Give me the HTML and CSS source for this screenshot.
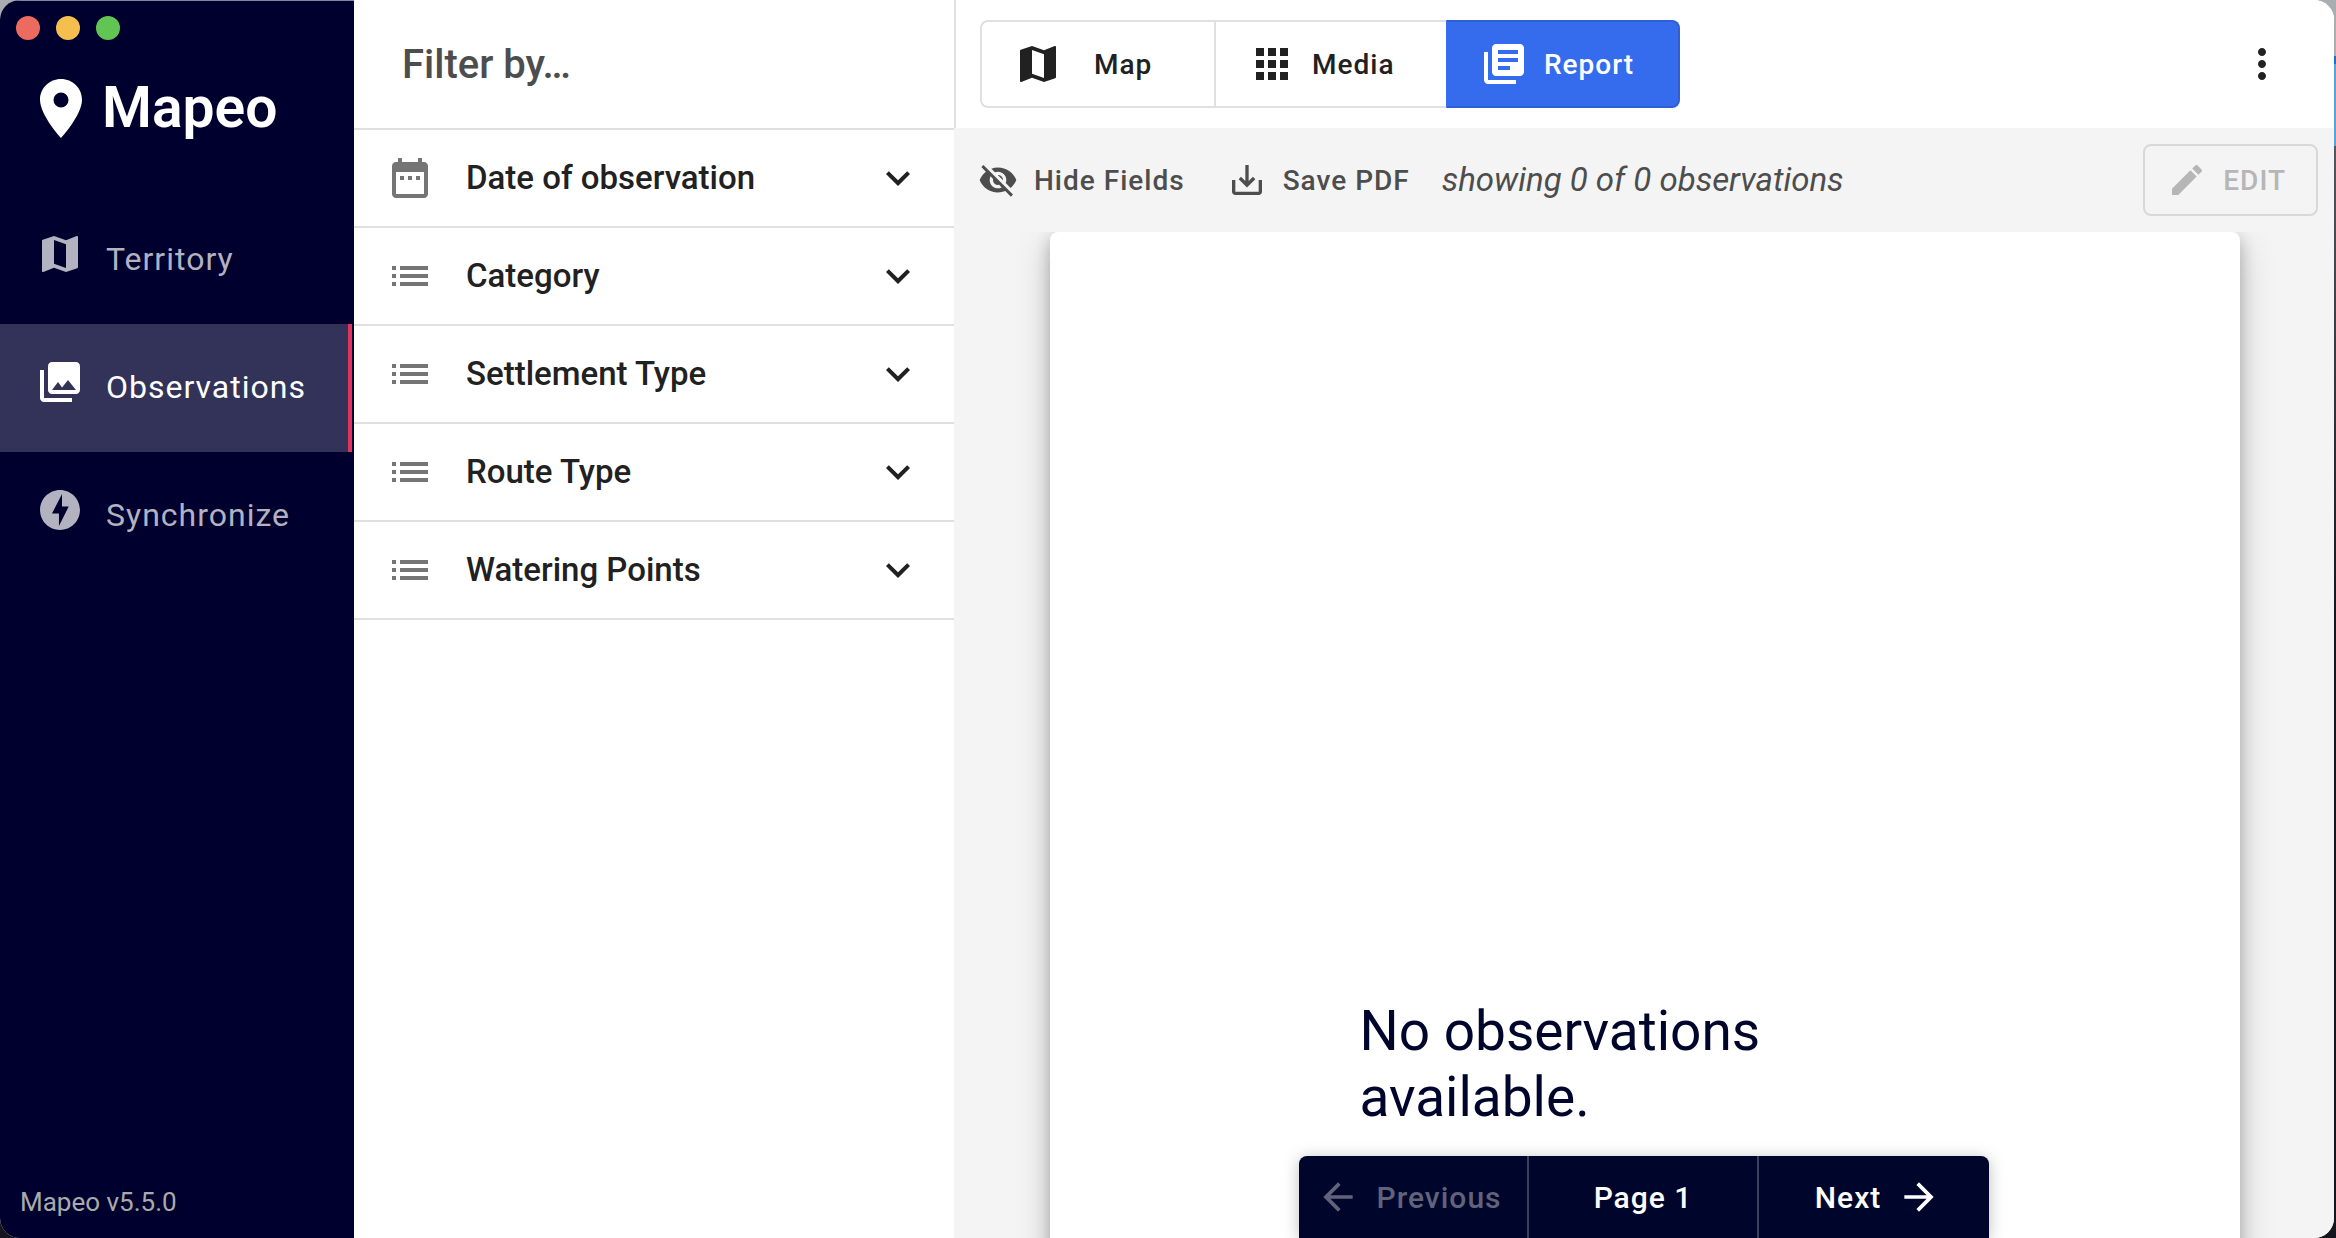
FILE: index.html
```html
<!DOCTYPE html>
<html lang="en">
<head>
<meta charset="utf-8">
<title>Mapeo</title>
<link rel="stylesheet" href="styles.css">
</head>
<body>
<svg class="defs" aria-hidden="true">
  <symbol id="map" viewBox="0 0 24 24"><path d="M20.5 3l-.16.03L15 5.1 9 3 3.36 4.900c-.21.07-.36.25-.36.48V20.500c0 .28.22.5.5.5l.16-.03L9 18.900l6 2.100 5.640-1.900c.21-.07.36-.25.36-.48V3.500c0-.28-.22-.5-.5-.5zM15 19l-6-2.110V5l6 2.110V19z"/></symbol>
  <symbol id="list" viewBox="0 0 24 24"><path d="M3 13h2v-2H3v2zm0 4h2v-2H3v2zm0-8h2V7H3v2zm4 4h14v-2H7v2zm0 4h14v-2H7v2zM7 7v2h14V7H7z"/></symbol>
  <symbol id="more" viewBox="0 0 24 24"><path d="M16.590 8.590L12 13.170 7.410 8.590 6 10l6 6 6-6z"/></symbol>
</svg>
<div class="window">
  <aside class="sidebar">
    <div class="lights"><span class="light close"></span><span class="light minimize"></span><span class="light expand"></span></div>
    <div class="brand">
      <svg class="pin" viewBox="0 0 42 59"><path fill-rule="evenodd" d="M21 0C9.400 0 0 9.200 0 20.700 0 36 21 59 21 59s21-23 21-38.300C42 9.200 32.600 0 21 0zm0 28.500a7.500 7.500 0 1 1 0-15 7.500 7.500 0 0 1 0 15z"/></svg>
      <span>Mapeo</span>
    </div>
    <nav class="nav">
      <a class="nav-item" href="#territory"><svg class="icon"><use href="#map"/></svg><span>Territory</span></a>
      <a class="nav-item selected" href="#observations" aria-current="page"><svg class="icon" viewBox="0 0 24 24"><path d="M22 16V4c0-1.100-.9-2-2-2H8c-1.100 0-2 .9-2 2v12c0 1.100.9 2 2 2h12c1.100 0 2-.9 2-2zm-11-4l2.030 2.710L16 11l4 5H8l3-4zM2 6v14c0 1.100.9 2 2 2h14v-2H4V6H2z"/></svg><span>Observations</span></a>
      <a class="nav-item" href="#synchronize"><svg class="icon" viewBox="0 0 24 24"><path d="M12 2.020c-5.510 0-9.980 4.470-9.980 9.980s4.470 9.980 9.980 9.980 9.980-4.470 9.980-9.980S17.510 2.020 12 2.020zM11.480 20v-6.260H8L13 4v6.260h3.350L11.480 20z"/></svg><span>Synchronize</span></a>
    </nav>
    <div class="version">Mapeo v5.5.0</div>
  </aside>

  <section class="filters">
    <h2 class="filters-title">Filter by…</h2>
    <button class="filter" type="button"><svg class="icon" viewBox="0 0 24 24"><path d="M19 4h-1V2h-2v2H8V2H6v2H5c-1.110 0-2 .9-2 2v14c0 1.100.89 2 2 2h14c1.100 0 2-.9 2-2V6c0-1.100-.9-2-2-2zm0 16H5V9h14v11zM7 11h2v2H7zM11 11h2v2h-2zM15 11h2v2h-2z"/></svg><span>Date of observation</span><svg class="icon chevron"><use href="#more"/></svg></button>
    <button class="filter" type="button"><svg class="icon"><use href="#list"/></svg><span>Category</span><svg class="icon chevron"><use href="#more"/></svg></button>
    <button class="filter" type="button"><svg class="icon"><use href="#list"/></svg><span>Settlement Type</span><svg class="icon chevron"><use href="#more"/></svg></button>
    <button class="filter" type="button"><svg class="icon"><use href="#list"/></svg><span>Route Type</span><svg class="icon chevron"><use href="#more"/></svg></button>
    <button class="filter" type="button"><svg class="icon"><use href="#list"/></svg><span>Watering Points</span><svg class="icon chevron"><use href="#more"/></svg></button>
  </section>

  <main class="main">
    <header class="topbar">
      <div class="views">
        <button class="view view-map" type="button"><svg class="icon"><use href="#map"/></svg><span>Map</span></button>
        <button class="view" type="button"><svg class="icon" viewBox="0 0 24 24"><path d="M4 8h4V4H4v4zm6 12h4v-4h-4v4zm-6 0h4v-4H4v4zm0-6h4v-4H4v4zm6 0h4v-4h-4v4zm6-10v4h4V4h-4zm-6 4h4V4h-4v4zm6 6h4v-4h-4v4zm0 6h4v-4h-4v4z"/></svg><span>Media</span></button>
        <button class="view active" type="button" aria-pressed="true"><svg class="icon" viewBox="0 0 24 24"><path d="M4 6H2v14c0 1.100.9 2 2 2h14v-2H4V6zm16-4H8c-1.100 0-2 .9-2 2v12c0 1.100.9 2 2 2h12c1.100 0 2-.9 2-2V4c0-1.100-.9-2-2-2zm-1 9H9V9h10v2zm-4 4H9v-2h6v2zm4-8H9V5h10v2z"/></svg><span>Report</span></button>
      </div>
      <button class="menu" type="button" aria-label="More options"><svg class="icon" viewBox="0 0 24 24"><path d="M12 8c1.100 0 2-.9 2-2s-.9-2-2-2-2 .9-2 2 .9 2 2 2zm0 2c-1.100 0-2 .9-2 2s.9 2 2 2 2-.9 2-2-.9-2-2-2zm0 6c-1.100 0-2 .9-2 2s.9 2 2 2 2-.9 2-2-.9-2-2-2z"/></svg></button>
    </header>
    <div class="toolbar">
      <button class="tool" type="button"><svg class="icon small" viewBox="0 0 24 24"><path d="M12 7c2.760 0 5 2.240 5 5 0 .65-.13 1.260-.36 1.830l2.920 2.920c1.510-1.260 2.700-2.890 3.430-4.750-1.730-4.390-6-7.500-11-7.500-1.400 0-2.740.25-3.980.7l2.160 2.160C10.740 7.130 11.350 7 12 7zM2 4.270l2.280 2.280.46.46C3.080 8.300 1.780 10.020 1 12c1.730 4.390 6 7.500 11 7.500 1.550 0 3.030-.3 4.380-.84l.42.42L19.730 22 21 20.730 3.270 3 2 4.270zM7.530 9.800l1.550 1.550c-.05.21-.08.43-.08.65 0 1.660 1.340 3 3 3 .22 0 .44-.03.65-.08l1.550 1.550c-.67.33-1.410.53-2.200.53-2.760 0-5-2.240-5-5 0-.79.2-1.530.53-2.200zm4.310-.78l3.150 3.150.02-.16c0-1.660-1.340-3-3-3l-.17.01z"/></svg><span>Hide Fields</span></button>
      <button class="tool" type="button"><svg class="icon small" viewBox="0 0 24 24"><path d="M19 12v7H5v-7H3v7c0 1.100.9 2 2 2h14c1.100 0 2-.9 2-2v-7h-2zm-6 .67l2.590-2.580L17 11.500l-5 5-5-5 1.410-1.410L11 12.670V3h2v9.670z"/></svg><span>Save PDF</span></button>
      <p class="count">showing 0 of 0 observations</p>
      <button class="edit" type="button" disabled><svg class="icon small" viewBox="0 0 24 24"><path d="M3 17.250V21h3.750L17.810 9.940l-3.750-3.750L3 17.250zM20.710 7.040c.39-.39.39-1.020 0-1.410l-2.340-2.340c-.39-.39-1.020-.39-1.410 0l-1.830 1.830 3.750 3.750 1.830-1.830z"/></svg><span>EDIT</span></button>
    </div>
    <div class="report">
      <article class="paper"><p class="empty">No observations available.</p></article>
      <div class="pager">
        <button class="page" type="button" disabled><svg class="icon arrow" viewBox="0 0 24 24"><path d="M20 11H7.830l5.590-5.590L12 4l-8 8 8 8 1.410-1.410L7.830 13H20v-2z"/></svg><span>Previous</span></button>
        <span class="page">Page 1</span>
        <button class="page" type="button"><span>Next</span><svg class="icon arrow" viewBox="0 0 24 24"><path d="M12 4l-1.410 1.410L16.170 11H4v2h12.170l-5.580 5.590L12 20l8-8z"/></svg></button>
      </div>
    </div>
  </main>
</div>
</body>
</html>
```
FILE: styles.css
```css
* { box-sizing: border-box; }

body {
  margin: 0;
  padding-right: 2px;
  background: linear-gradient(#a9acb0 56px, #1f6fc0 56px, #1f6fc0 64px, #5ba3d0 64px, #5ba3d0 146px, #55565c 146px, #15151d 50%);
  font-family: Roboto, "Liberation Sans", sans-serif;
  color: #212121;
}

button {
  margin: 0;
  padding: 0;
  border: 0;
  background: none;
  color: inherit;
  font: inherit;
}

h2, p { margin: 0; }

.defs { position: absolute; width: 0; height: 0; }

.icon {
  display: block;
  flex: none;
  width: 48px;
  height: 48px;
  fill: currentColor;
}

.icon.small { width: 40px; height: 40px; }
.icon.arrow { width: 44px; height: 44px; }

.window {
  display: flex;
  height: 100vh;
  overflow: hidden;
  border-radius: 20px;
  background: #fff;
}

/* Sidebar */
.sidebar {
  flex: none;
  display: flex;
  flex-direction: column;
  width: 354px;
  background: #00002f;
  border-top: 1px solid #8085a0;
  color: #b2b2c1;
}

.lights { display: flex; gap: 16px; padding: 15px 16px 0; }
.light { width: 24px; height: 24px; border-radius: 50%; }
.close { background: #ed6a5f; }
.minimize { background: #f5bf4f; }
.expand { background: #61c554; }

.brand {
  display: flex;
  align-items: center;
  gap: 20px;
  height: 136px;
  padding: 0 40px;
  color: #fff;
  font-size: 57px;
  font-weight: 600;
  line-height: 64px;
}

.pin { width: 42px; height: 59px; fill: currentColor; }

.nav { margin-top: 20px; }

.nav-item {
  display: flex;
  align-items: center;
  gap: 22px;
  height: 128px;
  margin-right: 2px;
  padding-left: 36px;
  border-right: 4px solid transparent;
  color: inherit;
  font-size: 32px;
  letter-spacing: 1px;
  text-decoration: none;
}

.nav-item .icon { margin-bottom: 12px; }
.nav-item span { margin-bottom: 2px; }

.nav-item.selected {
  border-color: #e2335d;
  background: #333359;
  color: #fff;
}

.version {
  margin-top: auto;
  padding: 0 20px 20px;
  color: #aaa;
  font-size: 26px;
  line-height: 32px;
}

/* Filters */
.filters {
  flex: none;
  display: flex;
  flex-direction: column;
  width: 600px;
}

.filters-title {
  height: 130px;
  padding-left: 48px;
  border-bottom: 2px solid #e0e0e0;
  color: #4d4d4d;
  font-size: 40px;
  font-weight: 500;
  line-height: 130px;
}

.filter {
  display: flex;
  align-items: center;
  gap: 32px;
  height: 98px;
  padding: 0 32px;
  border-bottom: 2px solid #e0e0e0;
  font-size: 33px;
  font-weight: 500;
}

.filter span { margin-bottom: 2px; }
.filter .icon { color: #757575; }
.filter .chevron { margin-left: auto; color: #212121; }

/* Main area */
.main {
  flex: 1;
  display: flex;
  flex-direction: column;
  min-width: 0;
  background: #f4f4f4;
}

.topbar {
  display: flex;
  align-items: center;
  justify-content: space-between;
  height: 128px;
  padding: 0 48px 0 24px;
  border-left: 2px solid #e0e0e0;
  background: #fff;
}

.views { display: flex; height: 88px; }

.view,
.tool,
.edit {
  display: flex;
  align-items: center;
  gap: 16px;
  font-size: 28px;
  font-weight: 500;
  letter-spacing: 1px;
}

.view {
  width: 232px;
  padding-left: 32px;
  border: 2px solid #e0e0e0;
  border-right-width: 0;
}

.view-map {
  gap: 32px;
  width: 234px;
  border-radius: 8px 0 0 8px;
}

.view.active {
  width: 234px;
  border: 2px solid #2f5fd3;
  border-left-color: #356cee;
  border-radius: 0 8px 8px 0;
  background: #356cee;
  color: #fff;
}

.toolbar {
  display: flex;
  align-items: center;
  height: 104px;
  padding: 0 16px 0 24px;
  color: #4d4d4d;
}

.tool { margin-right: 42px; }
.tool + .tool { margin-right: 32px; }

.count {
  margin-bottom: 2px;
  font-size: 33px;
  font-style: italic;
}

.edit {
  height: 72px;
  margin-left: auto;
  padding: 0 30px 0 22px;
  border: 2px solid #d8d8d8;
  border-radius: 8px;
  color: #b6b6b6;
}

.report {
  position: relative;
  flex: 1;
  min-height: 0;
  padding: 0 94px 0 96px;
  overflow: hidden;
}

.paper {
  display: flex;
  align-items: center;
  justify-content: center;
  aspect-ratio: 210 / 297;
  padding-bottom: 20px;
  border-radius: 8px;
  background: #fff;
  box-shadow: 0 10px 36px rgba(0, 0, 0, 0.18), 0 6px 16px rgba(0, 0, 0, 0.23);
}

.empty {
  width: 48%;
  color: #00052b;
  font-size: 55px;
  line-height: 66px;
}

.pager {
  position: absolute;
  bottom: 0;
  left: 50%;
  display: grid;
  grid-template-columns: repeat(3, 1fr);
  width: 690px;
  height: 82px;
  border-radius: 8px 8px 0 0;
  background: #00052b;
  box-shadow: 0 2px 16px rgba(0, 0, 0, 0.25);
  color: #fff;
  transform: translateX(-50%);
}

.page {
  display: flex;
  align-items: center;
  justify-content: center;
  gap: 16px;
  border-right: 2px solid #3d405c;
  font-size: 30px;
  font-weight: 500;
  letter-spacing: 1px;
}

.page:first-child { padding-right: 8px; }
.page:last-child { padding-left: 8px; border-right: 0; }
.page:disabled { color: #61637b; }
```
